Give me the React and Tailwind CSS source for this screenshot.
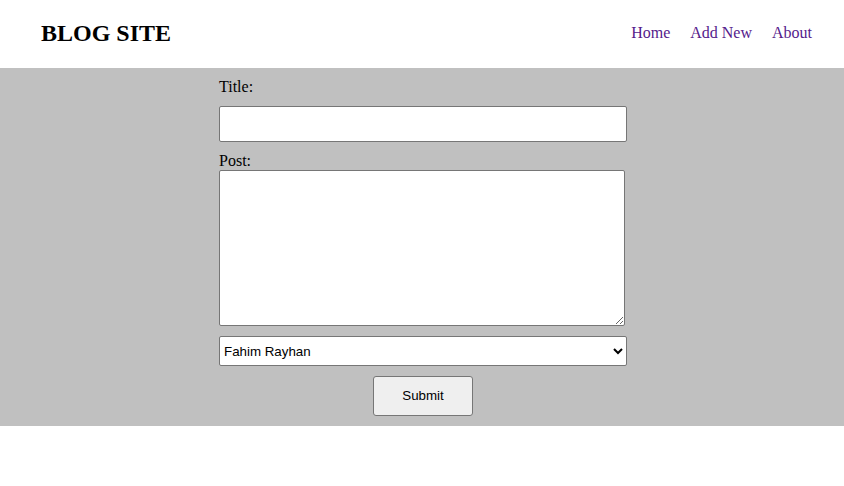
export default function App() {
  return (
    <div className="min-h-[486px] bg-white font-['Liberation_Serif',serif] text-black">
      <header className="flex h-[68px] items-center justify-between pb-[2px] pl-[41px] pr-[32px]">
        <h1 className="text-[24px] font-bold leading-none">BLOG SITE</h1>
        <nav className="flex gap-[20px] text-[16px] text-[#551a8b]">
          <a href="#">Home</a>
          <a href="#">Add New</a>
          <a href="#">About</a>
        </nav>
      </header>
      <main className="bg-[#c0c0c0] pt-[10px] pb-[10px]">
        <form className="mx-auto flex w-[406px] flex-col items-start" onSubmit={(e) => e.preventDefault()}>
          <label className="block text-[16px] leading-[18px]">Title:</label>
          <input
            type="text"
            className="my-[10px] h-[36px] w-[408px] shrink-0 rounded-[2px] border border-[#767676] bg-white px-[2px] font-['Liberation_Sans',sans-serif] text-[13.33px]"
          />
          <label className="block text-[16px] leading-[18px]">Post:</label>
          <textarea className="h-[156px] w-[406px] rounded-[2px] border border-[#767676] bg-white p-[2px] font-['Liberation_Mono',monospace] text-[13.33px]" />
          <select className="my-[10px] h-[30px] w-[408px] shrink-0 rounded-[2px] border border-[#767676] bg-white pl-0 font-['Liberation_Sans',sans-serif] text-[13.33px] text-black">
            <option>Fahim Rayhan</option>
          </select>
          <button
            type="submit"
            className="ml-[154px] h-[40px] w-[100px] rounded-[3px] border border-[#767676] bg-[#efefef] font-['Liberation_Sans',sans-serif] text-[13.33px] text-black"
          >
            Submit
          </button>
        </form>
      </main>
    </div>
  );
}
